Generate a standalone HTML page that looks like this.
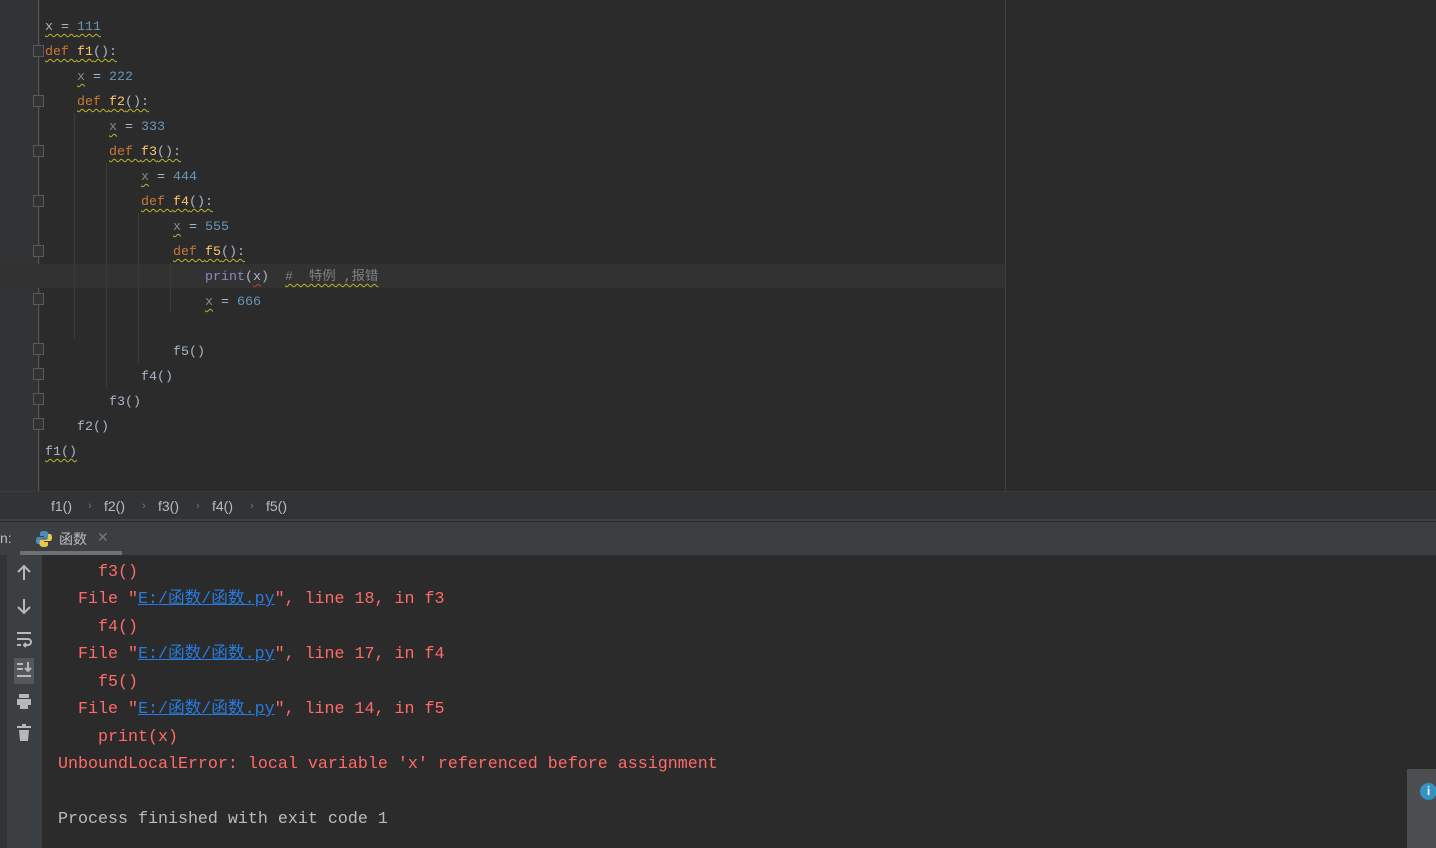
<!DOCTYPE html>
<html><head><meta charset="utf-8"><style>
*{margin:0;padding:0;box-sizing:border-box}
body{width:1436px;height:848px;overflow:hidden;background:#2b2b2b;position:relative;font-family:"Liberation Mono","Noto Sans CJK SC",monospace}
.ed{position:absolute;left:0;top:0;width:1436px;height:491px;background:#2b2b2b}
.gut{position:absolute;left:0;top:0;width:40px;height:491px;background:#313335}
.gline{position:absolute;left:38px;top:0;width:1px;height:491px;background:#555}
.l{position:absolute;font-size:13.33px;line-height:25px;height:25px;color:#a9b7c6;white-space:pre}
.k{color:#cc7832}.f{color:#ffc66d}.n{color:#6897bb}.v{color:#8a8a8a}.p{color:#8888c6}.c{color:#808080}
.w{text-decoration:underline wavy #bbb529;text-decoration-thickness:1px;text-underline-offset:3px}
.e{text-decoration:underline wavy #bc3f3c;text-decoration-thickness:1px;text-underline-offset:3px}
.ig{position:absolute;width:1px;background:#3b3b3b}
.fold{position:absolute;left:33px;width:11px;height:12px;border:1px solid #5a5a5a;background:#313335}
.bc{position:absolute;left:0;top:491px;width:1436px;height:30px;background:#313335;border-top:1px solid #3a3a3a;border-bottom:2px solid #3e4042;font-family:"Liberation Sans",sans-serif;font-size:14px;color:#bbb}
.bc span{position:absolute;top:6px}
.bc .a{color:#777;font-size:11px;top:8px}
.tb{position:absolute;left:0;top:522px;width:1436px;height:33px;background:#3c3f41;font-family:"Liberation Sans","Noto Sans CJK SC",sans-serif;font-size:14px;color:#bbb}
.con{position:absolute;left:42px;top:557px;right:0;bottom:0}
.cl{position:absolute;font-size:16.67px;line-height:27px;white-space:pre;color:#ff6b68}
.u{color:#287bde;text-decoration:underline}
.side{position:absolute;left:0;top:555px;width:42px;height:293px;background:#3c3f41}
</style></head><body>
<div class="ed">
<div class="gut"></div><div class="gline"></div>
<div style="position:absolute;left:0;top:264px;width:1005px;height:24px;background:#323232"></div>
<div style="position:absolute;left:1005px;top:0;width:1px;height:491px;background:#3f3f3f"></div>
<div class="ig" style="left:74px;top:113px;height:225px"></div>
<div class="ig" style="left:106px;top:163px;height:225px"></div>
<div class="ig" style="left:138px;top:213px;height:150px"></div>
<div class="ig" style="left:170px;top:263px;height:50px"></div>
<div class="fold" style="top:45px"></div><div class="fold" style="top:95px"></div><div class="fold" style="top:145px"></div><div class="fold" style="top:195px"></div><div class="fold" style="top:245px"></div>
<div class="fold" style="top:293px"></div><div class="fold" style="top:343px"></div><div class="fold" style="top:368px"></div><div class="fold" style="top:393px"></div><div class="fold" style="top:418px"></div>
<div class="l" style="left:45px;top:15px"><span class="w">x = <span class="n">111</span></span></div>
<div class="l" style="left:45px;top:40px"><span class="w"><span class="k">def </span><span class="f">f1</span>():</span></div>
<div class="l" style="left:77px;top:65px"><span class="v w">x</span> = <span class="n">222</span></div>
<div class="l" style="left:77px;top:90px"><span class="w"><span class="k">def </span><span class="f">f2</span>():</span></div>
<div class="l" style="left:109px;top:115px"><span class="v w">x</span> = <span class="n">333</span></div>
<div class="l" style="left:109px;top:140px"><span class="w"><span class="k">def </span><span class="f">f3</span>():</span></div>
<div class="l" style="left:141px;top:165px"><span class="v w">x</span> = <span class="n">444</span></div>
<div class="l" style="left:141px;top:190px"><span class="w"><span class="k">def </span><span class="f">f4</span>():</span></div>
<div class="l" style="left:173px;top:215px"><span class="v w">x</span> = <span class="n">555</span></div>
<div class="l" style="left:173px;top:240px"><span class="w"><span class="k">def </span><span class="f">f5</span>():</span></div>
<div class="l" style="left:205px;top:265px"><span class="p">print</span>(<span class="e">x</span>)  <span class="c w">#  特例 ,报错</span></div>
<div class="l" style="left:205px;top:290px"><span class="v w">x</span> = <span class="n">666</span></div>
<div class="l" style="left:173px;top:340px">f5()</div>
<div class="l" style="left:141px;top:365px">f4()</div>
<div class="l" style="left:109px;top:390px">f3()</div>
<div class="l" style="left:77px;top:415px">f2()</div>
<div class="l" style="left:45px;top:440px"><span class="w">f1()</span></div>
</div>
<div class="bc"><span style="left:51px">f1()</span><span class="a" style="left:88px">›</span><span style="left:104px">f2()</span><span class="a" style="left:142px">›</span><span style="left:158px">f3()</span><span class="a" style="left:196px">›</span><span style="left:212px">f4()</span><span class="a" style="left:250px">›</span><span style="left:266px">f5()</span></div>
<div class="tb">
<span style="position:absolute;left:0;top:8px">n:</span>
<svg style="position:absolute;left:35px;top:8px" width="18" height="18" viewBox="0 0 18 18"><path d="M9 1c-4 0-4 1.5-4 3v2h4v1H3c-2 0-2 2-2 4s1 3 2 3h2v-3c0-1.5 1-2.5 2.5-2.5h4c1.3 0 2-1 2-2V4c0-1.7-1.5-3-4.5-3z" fill="#4a8bc2"/><path d="M9 17c4 0 4-1.5 4-3v-2H9v-1h6c2 0 2-2 2-4s-1-3-2-3h-2v3c0 1.5-1 2.5-2.5 2.5h-4c-1.3 0-2 1-2 2V14c0 1.7 1.5 3 4.5 3z" fill="#e6c84a"/></svg>
<span style="position:absolute;left:59px;top:7px">函数</span>
<span style="position:absolute;left:97px;top:7px;color:#777">✕</span>
<div style="position:absolute;left:20px;top:29px;width:102px;height:4px;background:#6e7173"></div>
</div>
<div class="side">
<div style="position:absolute;left:0;top:0;width:7px;height:293px;background:#313335"></div>
<svg style="position:absolute;left:14px;top:8px" width="20" height="190" viewBox="0 0 20 190" fill="none" stroke="#b8b8b8" stroke-width="2">
<path d="M10 3v14M4 9l6-6 6 6"/>
<path d="M10 36v14M4 44l6 6 6-6"/>
<path d="M3 70h14M3 76h11a3 3 0 010 6h-4M12 80l-2 2 2 2M3 82h4"/>
<rect x="-4" y="95" width="28" height="26" rx="3" fill="#55585b" stroke="none"/>
<path d="M3 101h6M3 106h6M14 99v9M11 105l3 3 3-3M3 113h14"/>
<path d="M5 135v-4h10v4M3 136h14v6H3zM6 142h8v4H6z" fill="#b8b8b8" stroke="none"/>
<path d="M8 161h4v2h5v2H3v-2h5zM5 167h10l-1 11H6z" fill="#b8b8b8" stroke="none"/>
</svg>
</div>
<div class="con">
<div class="cl" style="left:56px;top:2px">f3()</div>
<div class="cl" style="left:36px;top:29px">File "<span class="u">E:/函数/函数.py</span>", line 18, in f3</div>
<div class="cl" style="left:56px;top:57px">f4()</div>
<div class="cl" style="left:36px;top:84px">File "<span class="u">E:/函数/函数.py</span>", line 17, in f4</div>
<div class="cl" style="left:56px;top:112px">f5()</div>
<div class="cl" style="left:36px;top:139px">File "<span class="u">E:/函数/函数.py</span>", line 14, in f5</div>
<div class="cl" style="left:56px;top:167px">print(x)</div>
<div class="cl" style="left:16px;top:194px">UnboundLocalError: local variable 'x' referenced before assignment</div>
<div class="cl" style="left:16px;top:249px;color:#bbb">Process finished with exit code 1</div>
</div>
<div style="position:absolute;left:1407px;top:769px;width:29px;height:79px;background:#4b4d4f"></div>
<div style="position:absolute;left:1420px;top:783px;width:17px;height:17px;border-radius:50%;background:#3592c4;color:#fff;font:bold 12px 'Liberation Sans',sans-serif;text-align:center;line-height:17px">i</div>
</body></html>
